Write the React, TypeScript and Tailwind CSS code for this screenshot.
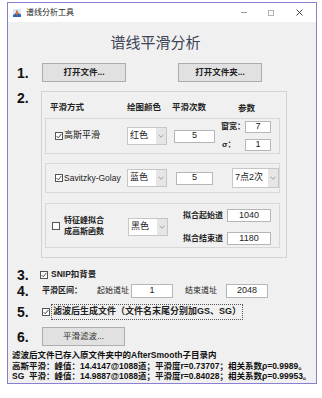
import type { ReactNode } from 'react';

const FONT = "font-['Liberation_Sans','Noto_Sans_CJK_SC',sans-serif]";

function CheckBox({ checked }: { checked: boolean }) {
  return (
    <span className="flex h-[8px] w-[8px] shrink-0 items-center justify-center border border-[#555] bg-white">
      {checked && (
        <svg width="6" height="6" viewBox="0 0 6 6">
          <path d="M0.6 3.1 L2.3 4.8 L5.4 0.9" fill="none" stroke="#333" strokeWidth="0.9" />
        </svg>
      )}
    </span>
  );
}

function Dropdown({ label, w, h = 'h-[18px]' }: { label: string; w: string; h?: string }) {
  return (
    <div className={`flex ${w} ${h} shrink-0 border border-[#c6c6c6] bg-white`}>
      <span className="flex flex-1 items-center pl-[2px] text-[9px] text-[#222]">{label}</span>
      <span className="flex w-[10px] items-center justify-center bg-[#e6e6e6]">
        <svg width="6" height="4" viewBox="0 0 6 4">
          <path d="M0.5 0.8 L3 3.2 L5.5 0.8" fill="none" stroke="#8a8a8a" strokeWidth="0.8" />
        </svg>
      </span>
    </div>
  );
}

function Field({ value, w, h = 'h-[13px]' }: { value: string; w: string; h?: string }) {
  return (
    <div className={`flex ${w} ${h} shrink-0 items-center justify-center border border-[#b6b6b6] bg-white text-[9px] text-[#222]`}>
      {value}
    </div>
  );
}

function Button({ children, w }: { children: ReactNode; w: string }) {
  return (
    <div className={`flex ${w} h-[19px] shrink-0 items-center justify-center border border-[#adadad] bg-[#e1e1e1] text-[8.5px] font-bold text-[#222]`}>
      {children}
    </div>
  );
}

function Num({ n, w }: { n: string; w: string }) {
  return <span className={`${w} shrink-0 text-[14px] font-bold leading-[14px] text-[#111]`}>{n}</span>;
}

function AppIcon() {
  return (
    <svg width="8" height="8" viewBox="0 0 8 8" className="ml-[5px] shrink-0">
      <rect x="0" y="0" width="8" height="8" fill="#dfe6f0" />
      <path d="M0 6 L2.5 4.5 L4 1 L5.2 4 L8 5.5 L8 8 L0 8 Z" fill="#2f64b5" />
      <path d="M2.5 4.5 L4 1 L5.2 4 L4.2 6.5 Z" fill="#e8701e" />
    </svg>
  );
}

export default function App() {
  return (
    <div className={`h-[398px] w-[322px] whitespace-nowrap bg-white pl-[7px] pt-[2px] text-[#1e1e1e] ${FONT}`}>
      <div className="flex h-[382px] w-[310px] flex-col border border-[#8b7fd2]">
        {/* title bar */}
        <div className="flex h-[19px] shrink-0 items-center bg-white">
          <AppIcon />
          <span className="ml-[5px] text-[8px] leading-[8px] text-[#222]">谱线分析工具</span>
          <div className="ml-auto mr-[13px] flex items-center">
            <span className="h-[1px] w-[6px] bg-[#999]" />
            <span className="ml-[21px] h-[6px] w-[6px] border border-[#b4b4b4]" />
            <svg width="7" height="7" viewBox="0 0 7 7" className="ml-[22px]">
              <path d="M0.5 0.5 L6.5 6.5 M6.5 0.5 L0.5 6.5" stroke="#333" strokeWidth="0.9" />
            </svg>
          </div>
        </div>

        {/* body */}
        <div className="flex flex-1 flex-col bg-[#f0f0f0]">
          <div className="mt-[11px] h-[20px] pr-[13px] text-center text-[15px] leading-[20px] text-[#3c4455]">
            谱线平滑分析
          </div>

          {/* 1 */}
          <div className="mt-[10px] flex h-[19px] items-center pl-[9px]">
            <Num n="1." w="w-[25px]" />
            <Button w="w-[84px]">打开文件...</Button>
            <div className="ml-[52px]">
              <Button w="w-[84px]">打开文件夹...</Button>
            </div>
          </div>

          {/* 2 */}
          <div className="mt-[9px] flex pl-[9px]">
            <Num n="2." w="w-[24px]" />
            <div className="flex h-[167px] w-[246px] flex-col border border-[#d2d2d2]">
              <div className="flex h-[26px] pt-[10px] text-[8.5px] font-bold leading-[10px] text-[#222]">
                <span className="w-[85px] pl-[8px]">平滑方式</span>
                <span className="w-[45px]">绘图颜色</span>
                <span className="w-[66px]">平滑次数</span>
                <span className="mt-[1px]">参数</span>
              </div>

              {/* gaussian */}
              <div className="ml-[3px] flex h-[36px] w-[235px] items-center border border-[#d8d8d8] pl-[9px]">
                <div className="flex w-[72px] items-center gap-[1px]">
                  <CheckBox checked />
                  <span className="text-[9px] text-[#222]">高斯平滑</span>
                </div>
                <Dropdown label="红色" w="w-[40px]" />
                <div className="ml-[7px]">
                  <Field value="5" w="w-[41px]" />
                </div>
                <div className="ml-[6px] flex flex-col gap-[6px]">
                  <div className="flex items-center">
                    <span className="w-[24px] text-[8px] font-bold text-[#222]">窗宽：</span>
                    <Field value="7" w="w-[26px]" h="h-[12px]" />
                  </div>
                  <div className="flex items-center">
                    <span className="w-[24px] pl-[1px] text-[8px] font-bold text-[#222]">σ：</span>
                    <Field value="1" w="w-[26px]" h="h-[12px]" />
                  </div>
                </div>
              </div>

              {/* savitzky-golay */}
              <div className="ml-[3px] mt-[9px] flex h-[30px] w-[235px] items-center border border-[#d8d8d8] pl-[9px]">
                <div className="flex w-[72px] items-center gap-[1px]">
                  <CheckBox checked />
                  <span className="text-[8.5px] text-[#222]">Savitzky-Golay</span>
                </div>
                <Dropdown label="蓝色" w="w-[40px]" />
                <div className="ml-[9px]">
                  <Field value="5" w="w-[37px]" />
                </div>
                <div className="ml-[19px]">
                  <Dropdown label="7点2次" w="w-[47px]" h="h-[20px]" />
                </div>
              </div>

              {/* peak fit */}
              <div className="ml-[3px] mt-[10px] flex h-[45px] w-[235px] items-center border border-[#d8d8d8] pl-[6px]">
                <CheckBox checked={false} />
                <div className="ml-[4px] flex w-[64px] flex-col text-[8px] font-bold leading-[11px] text-[#222]">
                  <span>特征峰拟合</span>
                  <span>成高斯函数</span>
                </div>
                <div className="mt-[3px]">
                  <Dropdown label="黑色" w="w-[40px]" />
                </div>
                <div className="ml-[15px] mt-[3px] flex flex-col gap-[10px]">
                  <div className="flex items-center">
                    <span className="w-[44px] text-[8px] font-bold text-[#222]">拟合起始道</span>
                    <Field value="1040" w="w-[44px]" />
                  </div>
                  <div className="flex items-center">
                    <span className="w-[44px] text-[8px] font-bold text-[#222]">拟合结束道</span>
                    <Field value="1180" w="w-[44px]" />
                  </div>
                </div>
              </div>
            </div>
          </div>

          {/* 3 */}
          <div className="mt-[8px] flex h-[17px] items-center pl-[9px]">
            <Num n="3." w="w-[23px]" />
            <CheckBox checked />
            <span className="ml-[3px] text-[8.5px] font-bold text-[#222]">SNIP扣背景</span>
          </div>

          {/* 4 */}
          <div className="flex h-[16px] items-center pl-[9px]">
            <Num n="4." w="w-[25px]" />
            <span className="w-[55px] text-[8px] font-bold text-[#222]">平滑区间：</span>
            <span className="w-[34px] text-[8px] text-[#222]">起始道址</span>
            <Field value="1" w="w-[42px]" h="h-[14px]" />
            <span className="ml-[12px] w-[41px] text-[8px] text-[#222]">结束道址</span>
            <Field value="2048" w="w-[42px]" h="h-[14px]" />
          </div>

          {/* 5 */}
          <div className="mt-[4px] flex h-[18px] items-center pl-[9px]">
            <Num n="5." w="w-[25px]" />
            <CheckBox checked />
            <span className="ml-[1px] flex h-[16px] items-center border border-dotted border-[#555] px-[1px] text-[9px] font-bold text-[#222]">
              滤波后生成文件（文件名末尾分别加GS、SG）
            </span>
          </div>

          {/* 6 */}
          <div className="mt-[6px] flex h-[19px] items-center pl-[9px]">
            <Num n="6." w="w-[25px]" />
            <Button w="w-[83px]">
              <span className="font-normal text-[#333]">平滑滤波...</span>
            </Button>
          </div>

          <div className="mt-[4px] whitespace-pre pl-[4px] text-[8.5px] font-bold leading-[10.5px] text-[#111]">
            <div>滤波后文件已存入原文件夹中的AfterSmooth子目录内</div>
            <div>高斯平滑：峰值：14.4147@1088道；平滑度r=0.73707；相关系数ρ=0.9989。</div>
            <div>SG  平滑：峰值：14.9887@1088道；平滑度r=0.84028；相关系数ρ=0.99953。</div>
          </div>
        </div>
      </div>
    </div>
  );
}
